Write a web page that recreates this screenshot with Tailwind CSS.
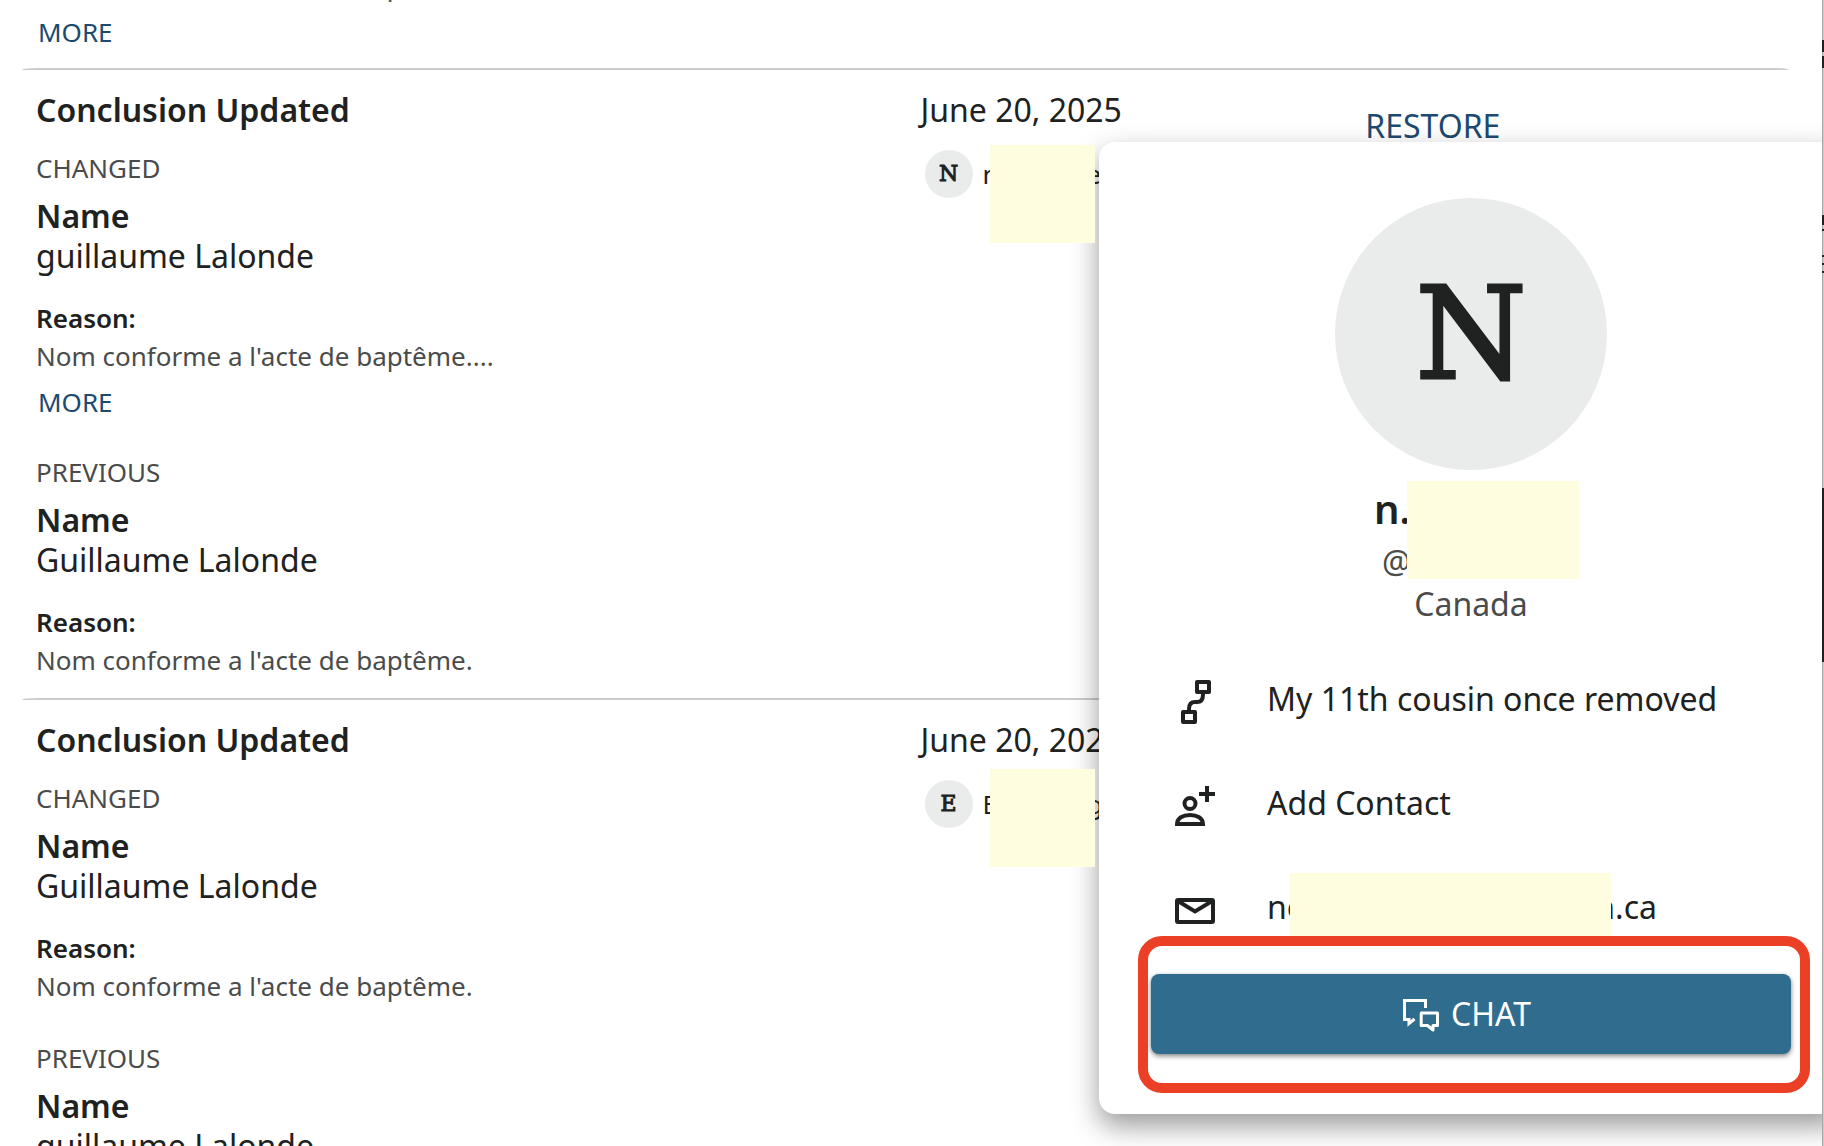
<!DOCTYPE html>
<html lang="en">
<head>
  <meta charset="UTF-8">
  <meta name="viewport" content="width=device-width, initial-scale=1">
  <title>Latest Changes</title>
  <script src="https://cdn.jsdelivr.net/npm/@tailwindcss/browser@4"></script>
</head>
<body class="flex h-screen overflow-hidden bg-white font-['Noto_Sans',sans-serif] text-[32px] leading-10 text-[#202121]">

  <main class="relative flex-1 overflow-hidden">
    <!-- Change log -->
    <div class="-mt-[30px] pl-[22px] pr-[33px]">
      <table class="w-full table-fixed border-separate border-spacing-0 text-left align-top">
        <colgroup>
          <col class="w-1/2">
          <col class="w-1/4">
          <col class="w-1/4">
        </colgroup>
        <tbody>
          <tr class="align-top">
            <td class="px-3.5 pb-5">
              <p class="text-[26px] leading-8 text-[#4a4b4b]">Nom conforme a l'acte de baptême....</p>
              <button type="button" class="mt-3.5 block pl-0.5 text-[26px] leading-8 text-[#1c4a70]">MORE</button>
            </td>
            <td></td>
            <td></td>
          </tr>

          <tr class="align-top">
            <td class="rounded-tl-[16px_2px] border-t-2 border-[#c9cccc] px-3.5 pt-5 pb-[22px]">
              <h2 class="font-semibold">Conclusion Updated</h2>
              <p class="mt-[22px] text-[26px] leading-8 text-[#4a4b4b]">CHANGED</p>
              <h3 class="mt-3 font-semibold">Name</h3>
              <p>guillaume Lalonde</p>
              <h4 class="mt-[26px] text-[26px] leading-8 font-semibold">Reason:</h4>
              <p class="mt-1.5 text-[26px] leading-8 text-[#4a4b4b]">Nom conforme a l'acte de baptême....</p>
              <button type="button" class="mt-3.5 block pl-0.5 text-[26px] leading-8 text-[#1c4a70]">MORE</button>
              <p class="mt-[38px] text-[26px] leading-8 text-[#4a4b4b]">PREVIOUS</p>
              <h3 class="mt-3 font-semibold">Name</h3>
              <p>Guillaume Lalonde</p>
              <h4 class="mt-[26px] text-[26px] leading-8 font-semibold">Reason:</h4>
              <p class="mt-1.5 text-[26px] leading-8 text-[#4a4b4b]">Nom conforme a l'acte de baptême.</p>
            </td>
            <td class="border-t-2 border-[#c9cccc] px-[15px] pt-5">
              <p>June 20, 2025</p>
              <div class="relative mt-5 ml-1 flex items-center gap-2.5">
                <span class="flex size-12 items-center justify-center rounded-full bg-[#eaeceb] font-['DejaVu_Serif',serif] text-[22px] [-webkit-text-stroke:1px_#202121]">N</span>
                <span class="flex gap-[88px] text-[26px] leading-8"><span>n</span><span>e</span></span>
                <span class="absolute -top-[5px] left-[65px] z-20 h-[98px] w-[105px] bg-[#fffde0]"></span>
              </div>
            </td>
            <td class="rounded-tr-[16px_2px] border-t-2 border-[#c9cccc] px-[18px] pt-9">
              <button type="button" class="block text-[#1c4a70]">RESTORE</button>
            </td>
          </tr>

          <tr class="align-top">
            <td class="rounded-tl-[16px_2px] border-t-2 border-[#c9cccc] px-3.5 pt-5 pb-[22px]">
              <h2 class="font-semibold">Conclusion Updated</h2>
              <p class="mt-[22px] text-[26px] leading-8 text-[#4a4b4b]">CHANGED</p>
              <h3 class="mt-3 font-semibold">Name</h3>
              <p>Guillaume Lalonde</p>
              <h4 class="mt-[26px] text-[26px] leading-8 font-semibold">Reason:</h4>
              <p class="mt-1.5 text-[26px] leading-8 text-[#4a4b4b]">Nom conforme a l'acte de baptême.</p>
              <p class="mt-10 text-[26px] leading-8 text-[#4a4b4b]">PREVIOUS</p>
              <h3 class="mt-3 font-semibold">Name</h3>
              <p>guillaume Lalonde</p>
            </td>
            <td class="border-t-2 border-[#c9cccc] px-[15px] pt-5">
              <p>June 20, 2025</p>
              <div class="relative mt-5 ml-1 flex items-center gap-2.5">
                <span class="flex size-12 items-center justify-center rounded-full bg-[#eaeceb] font-['DejaVu_Serif',serif] text-[22px] [-webkit-text-stroke:1px_#202121]">E</span>
                <span class="flex gap-[90px] text-[26px] leading-8"><span>E</span><span>g</span></span>
                <span class="absolute -top-[11px] left-[65px] z-20 h-[98px] w-[105px] bg-[#fffde0]"></span>
              </div>
            </td>
            <td class="rounded-tr-[16px_2px] border-t-2 border-[#c9cccc] px-[18px] pt-9"></td>
          </tr>
        </tbody>
      </table>
    </div>

    <!-- Contact card -->
    <section class="absolute top-[142px] -right-[21px] z-10 w-[744px] rounded-2xl bg-white px-[52px] pt-14 pb-[60px] shadow-[0_12px_28px_rgba(0,0,0,0.4)]">
      <div class="mx-auto flex size-[272px] items-center justify-center rounded-full bg-[#eaeceb] font-['DejaVu_Serif',serif] text-[127px] [-webkit-text-stroke:3px_#202121]">N</div>

      <div class="relative mt-3.5 flex flex-col items-center">
        <p class="w-[194px] text-[40px] leading-[50px] font-semibold">n.</p>
        <p class="mt-2 w-[178px] text-[#4a4b4b]">@</p>
        <p class="mt-0.5 text-[#4a4b4b]">Canada</p>
        <span class="absolute -top-[3px] left-64 h-[98px] w-[172px] bg-[#fffde0]"></span>
      </div>

      <ul class="mt-[55px] flex flex-col gap-14 pl-5">
        <li class="flex h-12 gap-12">
          <svg class="size-12" viewBox="0 0 48 48" fill="none" stroke="currentColor" stroke-width="4" stroke-linejoin="round">
            <rect x="26" y="3" width="12" height="10"/>
            <rect x="12" y="33" width="12" height="10"/>
            <path d="M32 14v1.500c0 5-2 7.500-6 7.500h-2c-4 0-6 2.500-6 7v2"/>
          </svg>
          <span>My 11th cousin once removed</span>
        </li>
        <li class="flex h-12 gap-12">
          <svg class="size-12" viewBox="0 0 48 48" fill="none" stroke="currentColor" stroke-width="4">
            <circle cx="19" cy="20.500" r="5.500"/>
            <path d="M6 41h26c0-6-6-9-13-9s-13 3-13 9z"/>
            <path d="M36 3v16M28 11h16"/>
          </svg>
          <a href="#">Add Contact</a>
        </li>
        <li class="relative flex h-12 gap-12">
          <svg class="size-12" viewBox="0 0 48 48" fill="none" stroke="currentColor" stroke-width="4">
            <rect x="6" y="13" width="36" height="22" rx="1"/>
            <path d="M6 13.500l18 11 18-11"/>
          </svg>
          <span class="flex w-[390px] justify-between"><span>ne</span><span>n.ca</span></span>
          <span class="absolute -top-3.5 left-[119px] h-16 w-[321px] bg-[#fffde0]"></span>
        </li>
      </ul>

      <div class="relative mt-[39px]">
        <button type="button" class="flex h-20 w-full items-center justify-center gap-2.5 rounded-lg bg-[#306c8d] pr-2.5 text-white shadow-[0_2px_5px_rgba(0,0,0,0.5)]">
          <svg class="size-10" viewBox="0 0 40 40" fill="none" stroke="currentColor" stroke-width="3">
            <path d="M24.500 14V6.500H3.500V25.500H8V29.500L13.500 25"/>
            <path d="M20.200 19H36.500V31.500H32V36L26.500 31.500H20.200Z" stroke-linejoin="round"/>
          </svg>
          CHAT
        </button>
        <!-- Highlight around the chat button -->
        <span class="pointer-events-none absolute -top-[38px] -right-[19px] -bottom-[39px] -left-[13px] rounded-3xl border-10 border-[#ec4026]"></span>
      </div>
    </section>
  </main>

  <!-- Edge of the dimmed page behind the panel -->
  <aside class="relative w-0.5 border-l border-[#a5a7a7] bg-[#cbcdcd]">
    <span class="absolute top-10 right-0 h-3 w-0.5 bg-[#202121]"></span>
    <span class="absolute top-14 right-0 h-3 w-0.5 bg-[#202121]"></span>
    <span class="absolute top-[215px] right-0 h-2.5 w-0.5 bg-[#202121]"></span>
    <span class="absolute top-[229px] right-0 h-0.5 w-0.5 bg-[#202121]"></span>
    <span class="absolute top-[255px] right-0 h-0.5 w-0.5 bg-[#202121]"></span>
    <span class="absolute top-[263px] right-0 h-0.5 w-0.5 bg-[#202121]"></span>
    <span class="absolute top-[271px] right-0 h-0.5 w-0.5 bg-[#202121]"></span>
    <span class="absolute top-[488px] right-0 h-[174px] w-0.5 bg-[#202121]"></span>
  </aside>
</body>
</html>
